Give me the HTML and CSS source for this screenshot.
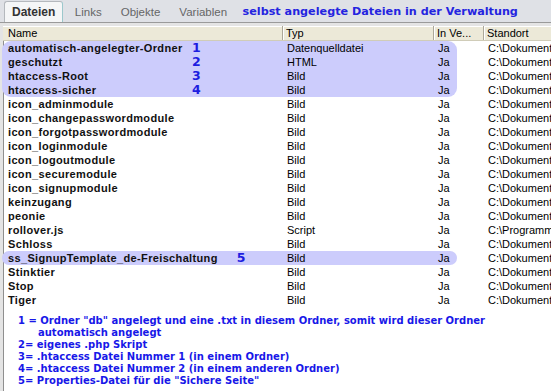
FILE: index.html
```html
<!DOCTYPE html>
<html lang="de">
<head>
<meta charset="utf-8">
<title>Dateien</title>
<link rel="stylesheet" href="styles.css">
</head>
<body>
<div class="window">
  <div class="tabbar">
    <div class="tab active">Dateien</div>
    <div class="tab">Links</div>
    <div class="tab">Objekte</div>
    <div class="tab">Variablen</div>
    <div class="title">selbst angelegte Dateien in der Verwaltung</div>
  </div>
  <div class="panel">
    <div class="header row">
      <div class="hcell">Name</div>
      <div class="hcell">Typ</div>
      <div class="hcell">In Ve...</div>
      <div class="hcell">Standort</div>
    </div>
    <div class="group">
      <div class="row"><div class="name"><span class="fn">automatisch-angelegter-Ordner</span><span class="num">1</span></div><div class="c">Datenquelldatei</div><div class="c">Ja</div><div class="c">C:\Dokumente und Einstellungen</div></div>
      <div class="row"><div class="name"><span class="fn">geschutzt</span><span class="num">2</span></div><div class="c">HTML</div><div class="c">Ja</div><div class="c">C:\Dokumente und Einstellungen</div></div>
      <div class="row"><div class="name"><span class="fn">htaccess-Root</span><span class="num">3</span></div><div class="c">Bild</div><div class="c">Ja</div><div class="c">C:\Dokumente und Einstellungen</div></div>
      <div class="row"><div class="name"><span class="fn">htaccess-sicher</span><span class="num">4</span></div><div class="c">Bild</div><div class="c">Ja</div><div class="c">C:\Dokumente und Einstellungen</div></div>
    </div>
    <div class="row"><div class="name">icon_adminmodule</div><div class="c">Bild</div><div class="c">Ja</div><div class="c">C:\Dokumente und Einstellungen</div></div>
    <div class="row"><div class="name">icon_changepasswordmodule</div><div class="c">Bild</div><div class="c">Ja</div><div class="c">C:\Dokumente und Einstellungen</div></div>
    <div class="row"><div class="name">icon_forgotpasswordmodule</div><div class="c">Bild</div><div class="c">Ja</div><div class="c">C:\Dokumente und Einstellungen</div></div>
    <div class="row"><div class="name">icon_loginmodule</div><div class="c">Bild</div><div class="c">Ja</div><div class="c">C:\Dokumente und Einstellungen</div></div>
    <div class="row"><div class="name">icon_logoutmodule</div><div class="c">Bild</div><div class="c">Ja</div><div class="c">C:\Dokumente und Einstellungen</div></div>
    <div class="row"><div class="name">icon_securemodule</div><div class="c">Bild</div><div class="c">Ja</div><div class="c">C:\Dokumente und Einstellungen</div></div>
    <div class="row"><div class="name">icon_signupmodule</div><div class="c">Bild</div><div class="c">Ja</div><div class="c">C:\Dokumente und Einstellungen</div></div>
    <div class="row"><div class="name">keinzugang</div><div class="c">Bild</div><div class="c">Ja</div><div class="c">C:\Dokumente und Einstellungen</div></div>
    <div class="row"><div class="name">peonie</div><div class="c">Bild</div><div class="c">Ja</div><div class="c">C:\Dokumente und Einstellungen</div></div>
    <div class="row"><div class="name">rollover.js</div><div class="c">Script</div><div class="c">Ja</div><div class="c">C:\Programme</div></div>
    <div class="row"><div class="name">Schloss</div><div class="c">Bild</div><div class="c">Ja</div><div class="c">C:\Dokumente und Einstellungen</div></div>
    <div class="group single">
      <div class="row"><div class="name"><span>ss_SignupTemplate_de-Freischaltung</span><span class="num5">5</span></div><div class="c">Bild</div><div class="c">Ja</div><div class="c">C:\Dokumente und Einstellungen</div></div>
    </div>
    <div class="row"><div class="name">Stinktier</div><div class="c">Bild</div><div class="c">Ja</div><div class="c">C:\Dokumente und Einstellungen</div></div>
    <div class="row"><div class="name">Stop</div><div class="c">Bild</div><div class="c">Ja</div><div class="c">C:\Dokumente und Einstellungen</div></div>
    <div class="row"><div class="name">Tiger</div><div class="c">Bild</div><div class="c">Ja</div><div class="c">C:\Dokumente und Einstellungen</div></div>
    <div class="notes">
      <div>1 = Ordner "db" angelegt und eine .txt in diesem Ordner, somit wird dieser Ordner</div>
      <div class="indent">automatisch angelegt</div>
      <div>2= eigenes .php Skript</div>
      <div>3= .htaccess Datei Nummer 1 (in einem Ordner)</div>
      <div>4= .htaccess Datei Nummer 2 (in einem anderen Ordner)</div>
      <div>5= Properties-Datei für die "Sichere Seite"</div>
    </div>
  </div>
</div>
</body>
</html>
```
FILE: styles.css
```css
html, body {
  margin: 0;
  padding: 0;
  background: #ffffff;
}
.window {
  width: 551px;
  height: 391px;
  overflow: hidden;
  font-family: "Liberation Sans", Arial, sans-serif;
  font-size: 11px;
  color: #000;
}
.tabbar {
  height: 23px;
  background: #dfe1e6;
  display: flex;
  align-items: flex-end;
  padding-left: 4px;
  box-sizing: border-box;
  border-bottom: 1px solid #9a9a9a;
}
.tab {
  height: 20px;
  line-height: 20px;
  font-family: "Liberation Sans", Arial, sans-serif;
  font-size: 11.5px;
  color: #666;
  padding: 0 9.5px;
}
.tab.active {
  background: #f5f6f7;
  border: 1px solid #b4b8bd;
  border-right-color: #9cc8cc;
  border-bottom: none;
  border-radius: 3px 3px 0 0;
  color: #333;
  font-weight: bold;
  font-size: 12px;
  padding: 0 7px 0 7px;
  margin-right: 2px;
  height: 21px;
  box-sizing: border-box;
  line-height: 20px;
}
.title {
  align-self: center;
  margin-left: 6px;
  font-family: "DejaVu Sans", Verdana, sans-serif;
  font-weight: bold;
  font-size: 11.2px;
  color: #2424e0;
  white-space: nowrap;
}
.panel {
  border-left: 3px solid #e4e4e4;
  box-shadow: inset 1px 0 0 #8f8f8f;
  padding: 3px 0 0 0;
  background: #ffffff;
  height: 368px;
  box-sizing: border-box;
  position: relative;
}
.panel::before {
  content: "";
  position: absolute;
  left: 0;
  right: 0;
  top: 0;
  height: 3px;
  background: #e4e4e4;
}
.row {
  display: grid;
  grid-template-columns: 280px 151px 50px 70px;
  height: 14px;
  line-height: 14px;
  white-space: nowrap;
  position: relative;
}
.header {
  height: 14px;
  background: #ece9d8;
  border-bottom: 1px solid #d0ccb8;
  box-shadow: inset 0 1px 0 #ffffff;
}
.hcell {
  padding-left: 3px;
  border-right: 1px solid #aca899;
  box-shadow: 1px 0 0 #ffffff;
  overflow: hidden;
  line-height: 14px;
}
.hcell:first-child { padding-left: 5px; }
.hcell:last-child { border-right: none; }
.name {
  font-weight: bold;
  padding-left: 5px;
  color: #111;
  display: flex;
  overflow: visible;
  letter-spacing: 0.35px;
}
.fn { width: 184px; flex: none; }
.c {
  padding-left: 4px;
  overflow: hidden;
}
.num, .num5 {
  font-family: "DejaVu Sans", Verdana, sans-serif;
  color: #1d1de0;
  font-size: 12.5px;
  font-weight: bold;
  line-height: 14px;
  letter-spacing: 0;
}
.num5 { margin-left: 19px; }
.group {
  position: relative;
}
.group::before {
  content: "";
  position: absolute;
  left: -1px;
  top: 0;
  bottom: 0;
  width: 455px;
  background: #ccccfc;
  border-radius: 9px;
}
.group.single::before { border-radius: 7px; }
.group .row { z-index: 1; }
.notes {
  padding: 8px 0 0 15px;
  font-family: "DejaVu Sans", Verdana, sans-serif;
  font-weight: bold;
  font-size: 10px;
  line-height: 12px;
  color: #1818e8;
  white-space: nowrap;
}
.notes .indent { padding-left: 20px; }
```
